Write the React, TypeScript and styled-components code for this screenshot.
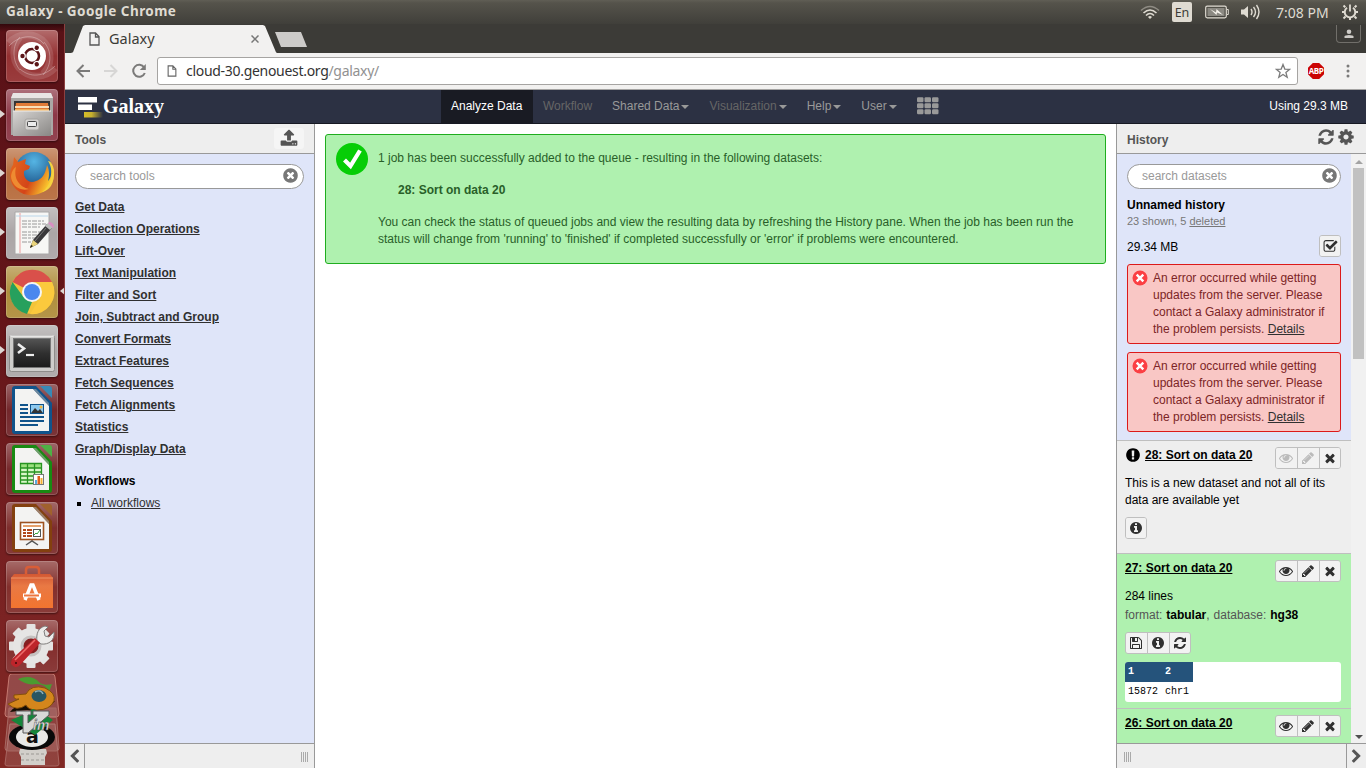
import React from "react";
import styled, { createGlobalStyle, css } from "styled-components";

const GlobalStyle = createGlobalStyle`
  * { box-sizing: border-box; }
  html, body { margin: 0; padding: 0; width: 1366px; height: 768px; overflow: hidden; }
  body { font-family: "Liberation Sans", Arial, sans-serif; font-size: 12px; line-height: 17px; color: #000; }
`;

/* ---------- icon glyphs (1792 unit grid) ---------- */
const CIRCLE = "M1664 896q0 209-103 385.5t-279.5 279.5-385.5 103-385.5-103-279.5-279.5-103-385.5 103-385.5 279.5-279.5 385.5-103 385.5 103 279.5 279.5 103 385.5z";
const GLYPHS = {
  refresh:
    "M1639 1056q0 5-1 7-64 268-268 434.5t-478 166.5q-146 0-282.5-55t-243.5-157l-129 129q-19 19-45 19t-45-19-19-45v-448q0-26 19-45t45-19h448q26 0 45 19t19 45-19 45l-137 137q71 66 161 102t187 36q134 0 250-65t186-179q11-17 53-117 8-23 30-23h192q13 0 22.5 9.5t9.5 22.5zm25-800v448q0 26-19 45t-45 19h-448q-26 0-45-19t-19-45 19-45l138-138q-148-137-349-137-134 0-250 65t-186 179q-11 17-53 117-8 23-30 23h-199q-13 0-22.5-9.5t-9.5-22.5v-7q65-268 270-434.5t480-166.5q146 0 284 55.5t245 156.5l130-129q19-19 45-19t45 19 19 45z",
  cog:
    "M1152 896q0-106-75-181t-181-75-181 75-75 181 75 181 181 75 181-75 75-181zm512-109v222q0 12-8 23t-20 13l-185 28q-19 54-39 91 35 50 107 138 10 12 10 25t-9 23q-27 37-99 108t-94 71q-12 0-26-9l-138-108q-44 23-91 38-16 136-29 186-7 28-36 28h-222q-14 0-24.5-8.5t-11.5-21.5l-28-184q-49-16-90-37l-141 107q-10 9-25 9-14 0-25-11-126-114-165-168-7-10-7-23 0-12 8-23 15-21 51-66.5t54-70.5q-27-50-41-99l-183-27q-13-2-21-12.5t-8-23.5v-222q0-12 8-23t19-13l186-28q14-46 39-92-40-57-107-138-10-12-10-24 0-10 9-23 26-36 98.5-107.5t94.5-71.5q13 0 26 10l138 107q44-23 91-38 16-136 29-186 7-28 36-28h222q14 0 24.5 8.5t11.5 21.5l28 184q49 16 90 37l142-107q9-9 24-9 13 0 25 10 129 119 165 170 7 8 7 22 0 12-8 23-15 21-51 66.5t-54 70.5q26 50 41 98l183 28q13 2 21 12.5t8 23.5z",
  times:
    "M1490 1322q0 40-28 68l-136 136q-28 28-68 28t-68-28l-294-294-294 294q-28 28-68 28t-68-28l-136-136q-28-28-28-68t28-68l294-294-294-294q-28-28-28-68t28-68l136-136q28-28 68-28t68 28l294 294 294-294q28-28 68-28t68 28l136 136q28 28 28 68t-28 68l-294 294 294 294q28 28 28 68z",
  pencil:
    "M491 1536l91-91-235-235-91 91v107h128v128h107zm523-928q0-22-22-22-10 0-17 7l-542 542q-7 7-7 17 0 22 22 22 10 0 17-7l542-542q7-7 7-17zm-54-192l416 416-832 832h-416v-416zm683 96q0 53-37 90l-166 166-416-416 166-165q36-38 90-38 53 0 91 38l235 234q37 39 37 91z",
  eye:
    "M1664 960q-152-236-381-353 61 104 61 225 0 185-131.5 316.5t-316.5 131.5-316.5-131.5-131.5-316.5q0-121 61-225-229 117-381 353 133 205 333.5 326.5t434.5 121.5 434.5-121.5 333.5-326.5zm-720-384q0-20-14-34t-34-14q-125 0-214.5 89.5t-89.5 214.5q0 20 14 34t34 14 34-14 14-34q0-86 61-147t147-61q20 0 34-14t14-34zm848 384q0 34-20 69-140 230-376.5 368.5t-499.5 138.5-499.5-139-376.5-368q-20-35-20-69t20-69q140-229 376.5-368t499.5-139 499.5 139 376.5 368q20 35 20 69z",
  info:
    "M1152 1376v-160q0-14-9-23t-23-9h-96v-512q0-14-9-23t-23-9h-320q-14 0-23 9t-9 23v160q0 14 9 23t23 9h96v320h-96q-14 0-23 9t-9 23v160q0 14 9 23t23 9h448q14 0 23-9t9-23zm-128-896v-160q0-14-9-23t-23-9h-192q-14 0-23 9t-9 23v160q0 14 9 23t23 9h192q14 0 23-9t9-23z" + CIRCLE,
  exclamation:
    "M896 128q209 0 385.5 103t279.5 279.5 103 385.5-103 385.5-279.5 279.5-385.5 103-385.5-103-279.5-279.5-103-385.5 103-385.5 279.5-279.5 385.5-103zm128 1247v-190q0-14-9-23.5t-22-9.5h-192q-13 0-23 10t-10 23v190q0 13 10 23t23 10h192q13 0 22-9.5t9-23.5zm-2-344l18-621q0-12-10-18-10-8-24-8h-220q-14 0-24 8-10 6-10 18l17 621q0 10 10 17.5t24 7.5h185q14 0 23.5-7.5t10.5-17.5z",
  timesCircle:
    "M1277 1122q0-26-19-45l-181-181 181-181q19-19 19-45 0-27-19-46l-90-90q-19-19-46-19-26 0-45 19l-181 181-181-181q-19-19-45-19-27 0-46 19l-90 90q-19 19-19 46 0 26 19 45l181 181-181 181q-19 19-19 45 0 27 19 46l90 90q19 19 46 19 26 0 45-19l181-181 181 181q19 19 45 19 27 0 46-19l90-90q19-19 19-46z" + CIRCLE,
  floppy:
    "M512 1536h768v-384h-768v384zm896 0h128v-896q0-14-10-38.5t-20-34.5l-281-281q-10-10-34-20t-39-10v416q0 40-28 68t-68 28h-576q-40 0-68-28t-28-68v-416h-128v1280h128v-416q0-40 28-68t68-28h832q40 0 68 28t28 68v416zm-384-928v-320q0-13-9.5-22.5t-22.5-9.5h-192q-13 0-22.5 9.5t-9.5 22.5v320q0 13 9.5 22.5t22.5 9.5h192q13 0 22.5-9.5t9.5-22.5zm640 32v928q0 40-28 68t-68 28h-1344q-40 0-68-28t-28-68v-1344q0-40 28-68t68-28h928q40 0 88 20t76 48l280 280q28 28 48 76t20 88z",
  checkSquare:
    "M1472 930v318q0 119-84.5 203.5t-203.5 84.5h-832q-119 0-203.5-84.5t-84.5-203.5v-832q0-119 84.5-203.5t203.5-84.5h832q63 0 117 25 15 7 18 23 3 17-9 29l-49 49q-10 10-23 10-3 0-9-2-23-6-45-6h-832q-66 0-113 47t-47 113v832q0 66 47 113t113 47h832q66 0 113-47t47-113v-254q0-13 9-22l64-64q10-10 23-10 6 0 12 3 20 8 20 29zm231-489l-814 814q-24 24-57 24t-57-24l-430-430q-24-24-24-57t24-57l110-110q24-24 57-24t57 24l263 263 647-647q24-24 57-24t57 24l110 110q24 24 24 57t-24 57z",
  chevronLeft:
    "M1427 301l-531 531 531 531q19 19 19 45t-19 45l-166 166q-19 19-45 19t-45-19l-742-742q-19-19-19-45t19-45l742-742q19-19 45-19t45 19l166 166q19 19 19 45t-19 45z",
  chevronRight:
    "M365 301l531 531-531 531q-19 19-19 45t19 45l166 166q19 19 45 19t45-19l742-742q19-19 19-45t-19-45l-742-742q-19-19-45-19t-45 19l-166 166q-19 19-19 45t19 45z",
  upload:
    "M1344 1472q0-26-19-45t-45-19-45 19-19 45 19 45 45 19 45-19 19-45zm256 0q0-26-19-45t-45-19-45 19-19 45 19 45 45 19 45-19 19-45zm128-224v320q0 40-28 68t-68 28h-1472q-40 0-68-28t-28-68v-320q0-40 28-68t68-28h427q21 56 70.5 92t110.5 36h256q61 0 110.5-36t70.5-92h427q40 0 68 28t28 68zm-325-648q-17 40-59 40h-256v448q0 26-19 45t-45 19h-256q-26 0-45-19t-19-45v-448h-256q-42 0-59-40-17-39 14-69l448-448q18-19 45-19t45 19l448 448q31 30 14 69z",
};

const GlyphSvg = styled.svg<{ $size: number }>`
  display: block;
  flex: none;
  width: ${(p) => p.$size}px;
  height: ${(p) => p.$size}px;
  fill: currentColor;
`;
const Glyph = ({ name, size = 14 }: { name: keyof typeof GLYPHS; size?: number }) => (
  <GlyphSvg $size={size} viewBox="0 0 1792 1792">
    <path fillRule="evenodd" d={GLYPHS[name]} />
  </GlyphSvg>
);

/* ---------- desktop ---------- */
const uiFont = css`font-family: "Noto Sans", "Open Sans", sans-serif;`;

const Desktop = styled.div`
  display: flex;
  flex-direction: column;
  width: 1366px;
  height: 768px;
  overflow: hidden;
`;
const SystemBar = styled.header`
  ${uiFont}
  flex: none;
  height: 24px;
  padding: 0 7px 0 6px;
  display: flex;
  align-items: center;
  justify-content: space-between;
  background: linear-gradient(#605e55 0, #55534b 3px, #403f3a 100%);
  color: #dfdbd2;
`;
const WindowTitle = styled.div`
  font-weight: 700;
  font-size: 13.5px;
  letter-spacing: 0.45px;
  margin-bottom: 1px;
  white-space: nowrap;
`;
const Indicators = styled.div`
  display: flex;
  align-items: center;
`;
const Lang = styled.div`
  width: 20px;
  height: 20px;
  margin: 0 13px 0 12px;
  border-radius: 2px;
  background: #dfdbd2;
  color: #3c3b37;
  font-size: 12.5px;
  line-height: 21px;
  text-align: center;
`;
const Clock = styled.div`
  font-size: 14px;
  width: 53px;
  margin: 0 12px 0 15px;
  white-space: nowrap;
`;
const Below = styled.div`
  display: flex;
  flex: 1;
  min-height: 0;
`;

/* ---------- launcher ---------- */
const Rail = styled.nav`
  flex: none;
  width: 65px;
  padding: 6px 6px 0;
  display: flex;
  flex-direction: column;
  gap: 7px;
  background: linear-gradient(#32080c 0, #5a1217 8px, #641519 40%, #7b2323 80%, #812823 100%);
  border-right: 1px solid #8d4040;
  overflow: hidden;
`;
const Tile = styled.div<{ $tint: string }>`
  position: relative;
  flex: none;
  width: 52px;
  height: 52px;
  border-radius: 4px;
  background: linear-gradient(rgba(255, 255, 255, 0.3), rgba(255, 255, 255, 0.02) 50%, rgba(255, 255, 255, 0.08)), ${(p) => p.$tint};
  box-shadow: inset 0 0 0 1px rgba(255, 255, 255, 0.17), 0 1px 2px rgba(0, 0, 0, 0.45);
  > svg { display: block; }
`;
const Pip = styled.i<{ $side?: "right" }>`
  position: absolute;
  top: 21px;
  ${(p) => (p.$side ? "right: -7px; border-right: 5px solid #ddd6d2;" : "left: -6px; border-left: 5px solid #ddd6d2;")}
  border-top: 4px solid transparent;
  border-bottom: 4px solid transparent;
`;
const StackSvg = styled.svg`
  display: block;
  flex: none;
  margin: -5px 0 0 -2px;
`;

const Art = ({ children }: { children: React.ReactNode }) => (
  <svg width="52" height="52" viewBox="0 0 52 52">{children}</svg>
);
const DashArt = () => (
  <Art>
    <path d="M3 13C12 2 30 2 39 13c7 9 7 22-2 31M49 38C38 50 22 48 13 38 6 29 6 16 14 7" fill="none" stroke="#fff" strokeOpacity=".13" strokeWidth="7" />
    <path d="M3 16C14 4 30 4 38 14M49 36C38 47 24 48 14 39" fill="none" stroke="#fff" strokeOpacity=".3" />
    <path d="M38 12c8 9 8 23-1 33M14 40C6 31 6 15 14 7" fill="none" stroke="#fff" strokeOpacity=".3" />
    <circle cx="26" cy="26" r="14" fill="#fff" />
    <circle cx="26" cy="26" r="7" fill="none" stroke="#5b1417" strokeWidth="2.6" />
    {[180, 60, 300].map((a) => (
      <g key={a} transform={`rotate(${a} 26 26)`}>
        <circle cx="35.500" cy="26" r="3.400" fill="#fff" />
        <circle cx="35.500" cy="26" r="2.200" fill="#5b1417" />
      </g>
    ))}
  </Art>
);
const FilesArt = () => (
  <Art>
    <defs>
      <linearGradient id="cab" x1="0" y1="0" x2="1" y2="1"><stop stopColor="#d7d5d3" /><stop offset="1" stopColor="#898785" /></linearGradient>
    </defs>
    <path d="M7 4h38l2 5v37H5V9z" fill="#aaa8a6" />
    <path d="M7 4h38l2 5H5z" fill="#e8e6e5" />
    <path d="M8 12h36v12H8z" fill="#343434" />
    <path d="M10 14h32l1 9H9z" fill="#e17b37" />
    <path d="M9 17h34v2H9z" fill="#f9dfb9" />
    <path d="M9 20h34v2H9z" fill="#efb15d" />
    <path d="M7 22h38v25H7z" fill="url(#cab)" />
    <path d="M7 22h38" stroke="#efedec" />
    <rect x="19" y="30" width="14" height="11" rx="2" fill="#d5d3d1" stroke="#a5a3a0" />
    <rect x="21.500" y="32.500" width="9" height="5" rx="1" fill="#ececec" stroke="#474747" />
  </Art>
);
const FirefoxArt = () => (
  <Art>
    <defs>
      <radialGradient id="globe" cx=".5" cy=".25" r=".8"><stop stopColor="#55b5e4" /><stop offset="1" stopColor="#124278" /></radialGradient>
      <linearGradient id="fox" x1="0" y1="0" x2="1" y2=".4"><stop stopColor="#e66a20" /><stop offset=".6" stopColor="#d44518" /><stop offset="1" stopColor="#f9c52c" /></linearGradient>
    </defs>
    <circle cx="28" cy="23" r="19" fill="url(#globe)" />
    <path d="M8 9l4 5 8-3-1 5 5 2-1 3-5 2c-1 8 5 13 12 10 6-2 9-6 11-16 3 6 2 13 1 16 3-3 4-8 3-17 4 7 4 17-2 23-6 8-22 12-32 3C2 34 3 22 7 17z" fill="url(#fox)" />
    <path d="M42 13c7 11 3 25-6 31 7-1 13-8 12-22-1-5-3-9-6-9z" fill="#f5d23f" />
    <path d="M10 19c-3 12 4 20 13 22-10 3-18-5-18-13 1-5 2-7 5-9z" fill="#ee8b31" />
  </Art>
);
const EditorArt = () => (
  <Art>
    <path d="M9 5h34v42H9z" fill="#f7f7f5" stroke="#a9a8a8" />
    <path d="M14 6v40" stroke="#ee9c9c" /><path d="M10 9h32" stroke="#b9d6ea" />
    <path d="M16 14h22M16 17h24M16 20h18M16 25h23M16 28h22M16 31h19M16 35h10" stroke="#999" strokeDasharray="5 1 3 1" />
    <path d="M24 41l3-8 14-16 5 4-14 16z" fill="#39383a" />
    <path d="M24 41l3-8 5 4z" fill="#ead47b" /><path d="M24 41l1-3 2 1z" fill="#111" />
    <path d="M39 19l3-3 5 4-3 3z" fill="#bbb" /><path d="M42 16l2-1q4 1 4 5l-1 1z" fill="#d98ec2" />
    <path d="M29 34l11-13" stroke="#777" />
  </Art>
);
const ChromeArt = () => (
  <Art>
    <circle cx="26" cy="26" r="22" fill="#f3c43a" />
    <path d="M26 26L6.5 16A22 22 0 0 1 46 16z" fill="#d9504a" />
    <path d="M6.5 16l11 15 8.500 5-5 12A22 22 0 0 1 6.500 16z" fill="#26a05d" />
    <path d="M26 16h20a22 22 0 0 1-22 32l11-17z" fill="#fbc93d" />
    <circle cx="26" cy="26" r="10" fill="#f5f5f5" /><circle cx="26" cy="26" r="8" fill="#4a87ee" />
  </Art>
);
const TerminalArt = () => (
  <Art>
    <defs><linearGradient id="scr" x1="0" y1="0" x2="0" y2="1"><stop stopColor="#555" /><stop offset=".5" stopColor="#303030" /><stop offset="1" stopColor="#1b1b1b" /></linearGradient></defs>
    <rect x="3.500" y="10.500" width="45" height="36" rx="2" fill="#cecdcb" stroke="#8e8c8a" />
    <path d="M4 11h44" stroke="#fff" />
    <rect x="7.500" y="13.500" width="37" height="29" fill="url(#scr)" stroke="#777" />
    <path d="M12 19l6 4.500-6 4.500" fill="none" stroke="#eee" strokeWidth="2.600" />
    <path d="M20 30h8" stroke="#eee" strokeWidth="2.200" />
  </Art>
);
const DocBase = ({ color, light, children }: { color: string; light: string; children: React.ReactNode }) => (
  <Art>
    <path d="M9 2h21l16 17v28a3 3 0 0 1-3 3H9a3 3 0 0 1-3-3V5a3 3 0 0 1 3-3z" fill={color} />
    <path d="M9 5h18l16 17v25H9z" fill="#f3f3f2" />
    <path d="M27 5l16 17v-3L30 5z" fill="#aaa" opacity=".6" />
    <path d="M34 2h9a3 3 0 0 1 3 3v9z" fill={light} />
    {children}
  </Art>
);
const WriterArt = () => (
  <DocBase color="#10538b" light="#3889b5">
    <path d="M14 21h8M14 25h8M14 29h8M14 33h24M14 37h24M14 41h18" stroke="#10538b" strokeWidth="2" />
    <rect x="24.500" y="20.500" width="13" height="9" fill="#8dc9ef" stroke="#10538b" />
    <path d="M25 29l4-5 3 3 2-2 3 4z" fill="#333" /><circle cx="35" cy="23" r="1.500" fill="#f3b53c" />
  </DocBase>
);
const CalcArt = () => (
  <DocBase color="#188a12" light="#4eb044">
    <path d="M14 20h22v21H14z" fill="#d9f7c9" />
    <path d="M14 21h22v4H14z" fill="#9be07e" />
    <path d="M14.500 20.500h21v20h-21zM14 25h22M14 29h22M14 33h22M14 37h22M21.500 20v21M28.500 20v21" fill="none" stroke="#279421" strokeWidth="1.300" />
    <rect x="27.500" y="31.500" width="10" height="10" fill="#fff" stroke="#777" />
    <path d="M29 37h2v4h-2z" fill="#59a9dc" /><path d="M31.500 33h2.500v8h-2.500z" fill="#e25f19" /><path d="M34.500 35h2v6h-2z" fill="#f5b032" />
  </DocBase>
);
const ImpressArt = () => (
  <DocBase color="#83400f" light="#a0612d">
    <path d="M20 43l6-4 6 4M26 37v3" fill="none" stroke="#555" strokeWidth="1.500" />
    <rect x="14.500" y="20.500" width="23" height="17" fill="#fff" stroke="#9e5220" strokeWidth="1.600" />
    <path d="M17 24h18" stroke="#df8948" strokeWidth="1.600" />
    <path d="M17 28h3M17 31h3M17 34h3M21 28h5M21 31h5M21 34h5" stroke="#b2481b" strokeWidth="2" />
    <rect x="27.500" y="27.500" width="7" height="7" fill="#fff" stroke="#555" /><path d="M28 33l2-2 1 1 3-4" fill="none" stroke="#35a43b" />
  </DocBase>
);
const StoreArt = () => (
  <Art>
    <defs><linearGradient id="bag" x1="0" y1="0" x2="0" y2="1"><stop stopColor="#d35833" /><stop offset=".35" stopColor="#e97944" /><stop offset="1" stopColor="#f2742f" /></linearGradient></defs>
    <path d="M20 18V9q0-3 3-3h7q3 0 3 3v9" fill="none" stroke="#d85d37" strokeWidth="2.500" />
    <path d="M5 17l3-4h36l3 4v30H5z" fill="url(#bag)" /><path d="M5 17h42" stroke="#ef9367" />
    <path d="M19 39l6-15h2l6 15" fill="none" stroke="#fff" strokeWidth="3.400" />
    <path d="M17 34.500h18" stroke="#fff" strokeWidth="4" /><path d="M18 34.500h15" stroke="#ed7740" strokeWidth="2" />
  </Art>
);
const SettingsArt = () => (
  <Art>
    <g transform="translate(25 26)">
      {[0, 45, 90, 135].map((a) => <rect key={a} x="-4.500" y="-22" width="9" height="44" rx="1" fill="#e4e3e2" transform={`rotate(${a})`} />)}
      <circle r="18" fill="#e6e5e4" /><circle r="9" fill="#851f21" stroke="#c5c1c0" strokeWidth="3" />
    </g>
    <path d="M31 21c-1-7 1-13 8-15l3 1-4 4 1 5 4 1 5-5c1 8-5 13-13 12z" fill="#ecebea" stroke="#807e7d" />
    <path d="M29 18l5 5-19 21q-4 5-8 2t0-8z" fill="#bd252b" />
    <path d="M9 40l20-20" stroke="#ef6b6b" strokeWidth="1.600" /><circle cx="10" cy="43" r="1" fill="#3b0909" />
  </Art>
);
const AppStack = () => (
  <StackSvg width="56" height="94" viewBox="0 0 56 94">
    <path d="M8 0h40q3 0 3 3l4 37q0 3-3 3H4q-3 0-3-3L5 3q0-3 3-3z" fill="#fff" fillOpacity=".17" stroke="#c57970" />
    <path d="M6 50h45l4 40q0 2-3 2H4q-3 0-3-2z" fill="#fff" fillOpacity=".12" stroke="#a76560" />
    <path d="M5 34h47l3 40q0 3-3 3H4q-3 0-3-3z" fill="#fff" fillOpacity=".12" stroke="#a86963" />
    <path d="M6 38q5-8 20-7l25-4q-9 12-28 9z" fill="#180e05" />
    <path d="M14 5q13-5 21 3 4 4 13 2l-3 8q-3-8-13-8-9 2-18-5z" fill="#4b9b30" />
    <path d="M4 30l11-5q-6 1-5-4l12-1q5-10 19-6 11 5 9 13-4 9-17 9-9 0-11-5-9 7-18-1z" fill="#d4861c" stroke="#86500a" />
    <ellipse cx="35" cy="22" rx="7.500" ry="6" fill="#295663" /><path d="M31 18q6-3 8 2" fill="none" stroke="#8fb0bb" strokeWidth="1.500" />
    <path d="M16 75h26l1 4-2 4v8H17v-8l-2-4z" fill="#d2cfca" /><path d="M17 80h24M17 86h24" stroke="#9b9893" strokeDasharray="3 2" />
    <ellipse cx="28" cy="63" rx="23" ry="13" fill="#090909" /><ellipse cx="28" cy="63" rx="16" ry="10" fill="#e9e9e7" />
    <text x="22" y="69" fontFamily="DejaVu Sans" fontWeight="700" fontSize="19" fill="#101010">a</text>
    <path d="M7 46l14-6 8-5 13 6 7 5-18 15z" fill="#15863a" />
    <path d="M12 37h15v4h-3v8l9-8h-4v-4h16v4L24 59h-5V41h-7z" fill="#d8d8d6" stroke="#595959" />
    <text x="29" y="56" fontFamily="Liberation Sans" fontWeight="700" fontStyle="italic" fontSize="14" fill="#dedddd" stroke="#444" strokeWidth=".4">im</text>
  </StackSvg>
);

const LAUNCHER: { art: () => React.JSX.Element; tint: string; running?: boolean; active?: boolean }[] = [
  { art: DashArt, tint: "#922c2d" },
  { art: FilesArt, tint: "#8a3443", running: true },
  { art: FirefoxArt, tint: "#b66a3a", running: true },
  { art: EditorArt, tint: "#aaa4a5", running: true },
  { art: ChromeArt, tint: "#ae8c39", running: true, active: true },
  { art: TerminalArt, tint: "#aaa6a6", running: true },
  { art: WriterArt, tint: "#702327" },
  { art: CalcArt, tint: "#742528" },
  { art: ImpressArt, tint: "#7b2928" },
  { art: StoreArt, tint: "#802b28" },
  { art: SettingsArt, tint: "#812a29" },
];

/* ---------- browser ---------- */
const Browser = styled.div`
  flex: 1;
  min-width: 0;
  display: flex;
  flex-direction: column;
`;
const TabStrip = styled.div`
  flex: none;
  height: 29px;
  padding: 1px 4px 0 6px;
  display: flex;
  background: #3c3b37;
`;
const Tab = styled.div`
  ${uiFont}
  width: 206px;
  height: 28px;
  padding: 0 18px 0 18px;
  display: flex;
  align-items: center;
  gap: 9px;
  background: #f2f1f0;
  clip-path: polygon(0 100%, 2px 97%, 12px 4%, 14px 0, 192px 0, 194px 4%, 205px 97%, 206px 100%);
  color: #3c3b37;
  font-size: 14.5px;
  > span { flex: 1; margin-bottom: 2px; }
`;
const NewTab = styled.div`
  width: 33px;
  height: 15px;
  margin: 7px 0 0 -3px;
  background: #cdcbc9;
  clip-path: polygon(1px 0, 27px 0, 33px 100%, 7px 100%);
`;
const Profile = styled.div`
  width: 25px;
  height: 18px;
  margin: 0 1px 0 auto;
  display: flex;
  align-items: center;
  justify-content: center;
  border: 1px solid #716f6a;
  border-top: 0;
  border-radius: 0 0 4px 4px;
`;
const Toolbar = styled.div`
  flex: none;
  height: 37px;
  padding: 0 10px 0 10px;
  display: flex;
  align-items: center;
  background: #f2f1f0;
  border-bottom: 1px solid #a5a4a3;
`;
const NavButtons = styled.div`
  display: flex;
  gap: 10px;
  width: 82px;
`;
const Omnibox = styled.div`
  ${uiFont}
  width: 1141px;
  height: 28px;
  padding: 0 6px 0 9px;
  display: flex;
  align-items: center;
  border: 1px solid #a6a4a2;
  border-radius: 3px;
  background: #fff;
  font-size: 14px;
  color: #333;
  > p { flex: 1; margin: 0 0 1px 9px; letter-spacing: -0.3px; }
  em { font-style: normal; color: #919191; }
`;
const Extension = styled.div`
  width: 16px;
  height: 16px;
  margin: 0 22px 0 10px;
  display: flex;
  align-items: center;
  justify-content: center;
  clip-path: polygon(30% 0, 70% 0, 100% 30%, 100% 70%, 70% 100%, 30% 100%, 0 70%, 0 30%);
  background: #cb0404;
  color: #fff;
  font: 700 8px/16px "Open Sans", sans-serif;
  letter-spacing: -0.4px;
`;

/* ---------- Galaxy masthead ---------- */
const Masthead = styled.div`
  flex: none;
  height: 34px;
  padding: 0 18px 0 13px;
  display: flex;
  background: #2c3143;
  border-bottom: 1px solid #171923;
`;
const Brand = styled.div`
  width: 363px;
  display: flex;
  align-items: center;
  color: #fff;
  font: 700 20px/32px "Liberation Serif", serif;
  padding-bottom: 2px;
  > svg { margin-top: 2px; }
`;
const Menu = styled.div`
  flex: 1;
  display: flex;
`;
const MenuItem = styled.div<{ $tone?: "active" | "dim" }>`
  padding: 0 10px 1px;
  display: flex;
  align-items: center;
  white-space: nowrap;
  color: ${(p) => (p.$tone === "active" ? "#fff" : p.$tone === "dim" ? "#666" : "#999")};
  background: ${(p) => (p.$tone === "active" ? "#191b23" : "transparent")};
  &:first-child { padding-right: 10.6px; }
`;
const Caret = styled.i`
  margin: 2px 0 0 2px;
  border: 4px solid transparent;
  border-top-color: #999;
  border-bottom: 0;
`;
const Quota = styled.div`
  color: #fff;
  line-height: 32px;
`;

/* ---------- panels ---------- */
const Workspace = styled.main`
  flex: 1;
  min-height: 0;
  display: grid;
  grid-template-columns: 250px 1fr 250px;
`;
const Panel = styled.aside<{ $side: "left" | "right" }>`
  display: flex;
  flex-direction: column;
  min-height: 0;
  background: #dfe5f9;
  border-${(p) => (p.$side === "left" ? "right" : "left")}: 1px solid #999;
`;
const PanelHeader = styled.div`
  flex: none;
  height: 30px;
  padding: 2px 12px 0 10px;
  display: flex;
  align-items: center;
  background: #eee;
  border-bottom: 1px solid #999;
  color: #555;
  font-weight: 700;
  > span { flex: 1; padding-top: 2px; }
`;
const UploadButton = styled.div`
  width: 30px;
  height: 21px;
  margin: 0 -2px 2px 0;
  padding-bottom: 2px;
  display: flex;
  align-items: center;
  justify-content: center;
  border-radius: 3px;
  background: #f5f5f5;
`;
const HeaderIcons = styled.div`
  display: flex;
  gap: 2px;
  margin: 0 -1px 6px 0;
`;
const PanelFooter = styled.div`
  flex: none;
  height: 25px;
  display: flex;
  justify-content: space-between;
  background: #eee;
  border-top: 1px solid #999;
  color: #555;
`;
const Collapse = styled.div<{ $side: "left" | "right" }>`
  width: 20px;
  display: flex;
  align-items: center;
  justify-content: center;
  border-${(p) => (p.$side === "left" ? "right" : "left")}: 1px solid #999;
`;
const Grip = styled.div`
  width: 7px;
  height: 10px;
  margin: 8px 6px 0 7px;
  background: repeating-linear-gradient(90deg, #aaa 0 1px, transparent 1px 2px);
`;
const SearchBox = styled.div<{ $end: number }>`
  height: 25px;
  padding: 0 ${(p) => p.$end}px 0 14px;
  display: flex;
  align-items: center;
  justify-content: space-between;
  border: 1px solid #999;
  border-radius: 13px;
  background: #fff;
  color: #999;
  > svg { color: #777; margin-bottom: 2px; }
`;
const ToolsBody = styled.div`
  flex: 1;
  padding: 10px;
`;
const ToolList = styled.div`
  display: flex;
  flex-direction: column;
  align-items: flex-start;
  margin-top: 7px;
  line-height: 22px;
`;
const ToolLink = styled.a<{ $light?: boolean }>`
  color: #303030;
  font-weight: ${(p) => (p.$light ? 400 : 700)};
  text-decoration: underline;
`;
const Heading = styled.div`
  margin-top: 10px;
  font-weight: 700;
`;
const Bullet = styled.div`
  display: flex;
  align-items: center;
  gap: 10px;
  padding-left: 2px;
  &::before { content: ""; width: 4px; height: 4px; margin-top: 2px; background: #000; }
`;
const Center = styled.section`
  padding: 10px;
  background: #fff;
`;
const Done = styled.div`
  height: 130px;
  padding: 8px 10px;
  display: flex;
  gap: 10px;
  border: 1px solid #1fad1f;
  border-radius: 3px;
  background: #aff1af;
  color: #295f29;
  > svg { flex: none; }
  p { margin: 0 0 15px; }
`;
const DoneText = styled.div`
  padding-top: 7px;
  b { display: block; margin: 0 0 15px 20px; }
`;

/* ---------- history ---------- */
const Scroller = styled.div`
  flex: 1;
  min-height: 0;
  display: flex;
`;
const HistoryList = styled.div`
  flex: 1;
  min-width: 0;
  overflow: hidden;
`;
const HistoryInfo = styled.div`
  height: 287px;
  padding: 10px 10px 0;
  border-bottom: 1px solid #bfbfbf;
`;
const HistoryName = styled.div`
  margin-top: 8px;
  font-weight: 700;
`;
const Shown = styled.div`
  font-size: 11px;
  line-height: 15px;
  color: #777;
`;
const SizeRow = styled.div`
  display: flex;
  align-items: center;
  justify-content: space-between;
  height: 22px;
  margin: 6px 0 7px;
  > span { padding-top: 2px; }
`;
const ErrorBox = styled.div`
  height: 80px;
  margin-bottom: 8px;
  padding: 5px;
  display: flex;
  gap: 4px;
  border: 1px solid #dc1a1a;
  border-radius: 3px;
  background: #f9c7c5;
  color: #7c2526;
  > svg { flex: none; margin-left: -1px; margin-right: 1px; }
  u { color: #303030; }
`;
const Dataset = styled.div<{ $state: "new" | "ok"; $height: number }>`
  height: ${(p) => p.$height}px;
  padding: 6px 10px 0 8px;
  background: ${(p) => (p.$state === "ok" ? "#aff1af" : "#eee")};
  border-bottom: 1px solid #bfbfbf;
`;
const TitleBar = styled.div`
  display: flex;
  align-items: flex-start;
  height: 22px;
  > svg { margin-right: 4px; }
`;
const DatasetTitle = styled.a`
  flex: 1;
  font-weight: 700;
  text-decoration: underline;
`;
const Buttons = styled.div`
  display: flex;
  width: max-content;
  border: 1px solid #bfbfbf;
  border-radius: 3px;
  overflow: hidden;
`;
const IconButton = styled.div<{ $off?: boolean }>`
  width: 22px;
  height: 20px;
  display: flex;
  align-items: center;
  justify-content: center;
  background: #f2f2f2;
  color: ${(p) => (p.$off ? "#bbb" : "#303030")};
  &:not(:last-child) { padding-right: 1px; }
  &:first-child { width: 21px; }
  &:last-child { width: 21px; }
  &:only-child { width: 20px; }
  & + & { border-left: 1px solid #bfbfbf; }
`;
const Blurb = styled.div<{ $gap: number }>`
  margin: 6px 0 ${(p) => p.$gap}px;
`;
const Meta = styled.div`
  margin-bottom: 8px;
  color: #555;
  word-spacing: 0.6px;
  b { color: #000; }
`;
const Peek = styled.div`
  height: 40px;
  margin-top: 8px;
  border-radius: 3px;
  background: #fff;
  overflow: hidden;
  font: 10px/20px "Liberation Mono", monospace;
`;
const PeekRow = styled.div<{ $head?: boolean }>`
  display: grid;
  grid-template-columns: 37px 1fr;
  width: 68px;
  padding-left: 3px;
  line-height: ${(p) => (p.$head ? 20 : 19)}px;
  height: 20px;
  ${(p) => p.$head && "background: #25537b; color: #fff; font-weight: 700;"}
`;
const Scrollbar = styled.div`
  width: 15px;
  padding: 6px 0 4px;
  display: flex;
  flex-direction: column;
  align-items: center;
  background: #f1f1f1;
`;
const Arrow = styled.i<{ $up?: boolean }>`
  border: 4px solid transparent;
  ${(p) => (p.$up ? "border-top: 0; border-bottom-color: #a3a3a3; margin-bottom: 4px;" : "border-bottom: 0; border-top-color: #505050; margin-top: auto;")}
`;
const Thumb = styled.div`
  width: 11px;
  height: 191px;
  background: #c1c1c1;
`;

const RedCross = () => (
  <svg width="16" height="16" viewBox="0 0 16 16">
    <circle cx="8" cy="8" r="7.500" fill="#fb3f43" />
    <path d="M4.700 4.700l6.600 6.600M11.300 4.700l-6.600 6.600" stroke="#fff" strokeWidth="2.400" />
  </svg>
);
const PageIcon = ({ w, h, color }: { w: number; h: number; color: string }) => (
  <svg width={w} height={h} viewBox="0 0 11 14"><path d="M1 1h5.500l3.500 3.500V13H1zM6.500 1v4H10" fill="none" stroke={color} strokeWidth="1.300" /></svg>
);
const ErrorMessage = () => (
  <ErrorBox>
    <RedCross />
    <div>An error occurred while getting updates from the server. Please contact a Galaxy administrator if the problem persists. <u>Details</u></div>
  </ErrorBox>
);
const Actions = ({ off }: { off?: boolean }) => (
  <Buttons>
    <IconButton $off={off}><Glyph name="eye" /></IconButton>
    <IconButton $off={off}><Glyph name="pencil" /></IconButton>
    <IconButton><Glyph name="times" /></IconButton>
  </Buttons>
);

const TOOLS = ["Get Data", "Collection Operations", "Lift-Over", "Text Manipulation", "Filter and Sort", "Join, Subtract and Group", "Convert Formats", "Extract Features", "Fetch Sequences", "Fetch Alignments", "Statistics", "Graph/Display Data"];

export default function App() {
  return (
    <Desktop>
      <GlobalStyle />
      <SystemBar>
        <WindowTitle>Galaxy - Google Chrome</WindowTitle>
        <Indicators>
          <svg width="20" height="16" viewBox="0 0 20 16" fill="none" stroke="#dfdbd2" strokeWidth="1.600">
            <path d="M1 6.500q9-8 18 0" stroke="#8f8c84" /><path d="M3.500 9q6.500-6 13 0M6 11.500q4-4 8 0" /><path d="M8 13q2-1.800 4 0l-2 2z" fill="#dfdbd2" stroke="none" />
          </svg>
          <Lang>En</Lang>
          <svg width="24" height="14" viewBox="0 0 24 14">
            <rect x=".7" y="1.200" width="20.600" height="11.600" rx="1.500" fill="none" stroke="#dfdbd2" strokeWidth="1.200" />
            <rect x="2.500" y="3" width="17" height="8" fill="#8b8982" /><path d="M22 4.500h1.300v5H22" stroke="#dfdbd2" fill="none" />
            <path d="M5 4l6 3.500L11.500 4 18 10l-6-2.500-.5 2.500z" fill="#f5f2eb" />
          </svg>
          <svg width="21" height="18" viewBox="0 0 21 18" style={{ marginLeft: 11 }}>
            <path d="M1 6.500h3l4-3.500v12l-4-3.500H1z" fill="#dfdbd2" />
            <path d="M11 6q2 3 0 6M13.500 4q4 5 0 10M16.500 2q5 7 0 14" fill="none" stroke="#dfdbd2" strokeWidth="1.400" />
          </svg>
          <Clock>7:08 PM</Clock>
          <svg width="18" height="18" viewBox="0 0 18 18" fill="none" stroke="#dfdbd2">
            <path d="M6 4.800a5.300 5.300 0 1 0 6 0" strokeWidth="2" /><path d="M9 1.500v7" strokeWidth="1.800" />
            <path d="M4.300 4.300L2.500 2.500M13.700 4.300l1.800-1.800M3.500 9H1M14.500 9H17M4.500 13.500l-2 2M13.500 13.500l2 2M9 14.500V17" strokeWidth="2" />
          </svg>
        </Indicators>
      </SystemBar>
      <Below>
        <Rail>
          {LAUNCHER.map(({ art: Icon, tint, running, active }, i) => (
            <Tile key={i} $tint={tint}>
              <Icon />
              {running && <Pip />}
              {active && <Pip $side="right" />}
            </Tile>
          ))}
          <AppStack />
        </Rail>
        <Browser>
          <TabStrip>
            <Tab>
              <PageIcon w={11} h={14} color="#555" />
              <span>Galaxy</span>
              <svg width="8" height="8" viewBox="0 0 8 8"><path d="M.5.5l7 7M7.500.5l-7 7" stroke="#777" strokeWidth="1.500" /></svg>
            </Tab>
            <NewTab />
            <Profile>
              <svg width="10" height="10" viewBox="0 0 10 10" fill="#cdcbc7"><circle cx="5" cy="2.700" r="2.300" /><path d="M.5 9V7.500Q1 6 5 6t4.500 1.500V9z" /></svg>
            </Profile>
          </TabStrip>
          <Toolbar>
            <NavButtons>
              <svg width="18" height="18" viewBox="0 0 18 18" fill="none" stroke="#7b7a79" strokeWidth="2"><path d="M15 9H2.500M8.500 3L2.500 9l6 6" /></svg>
              <svg width="18" height="18" viewBox="0 0 18 18" fill="none" stroke="#d7d6d5" strokeWidth="2"><path d="M1 9h12.500M7.500 3l6 6-6 6" /></svg>
              <svg width="18" height="18" viewBox="0 0 18 18" fill="none" stroke="#7b7a79" strokeWidth="2"><path d="M13.200 5.500A6 6 0 1 0 13.800 11" /><path d="M14.800 2v6h-6z" fill="#7b7a79" stroke="none" /></svg>
            </NavButtons>
            <Omnibox>
              <PageIcon w={10} h={12} color="#666" />
              <p>cloud-30.genouest.org<em>/galaxy/</em></p>
              <svg width="16" height="16" viewBox="0 0 16 16"><path d="M8 1.500l1.800 4.600 4.900.2-3.800 3.100 1.300 4.800L8 11.500l-4.200 2.700 1.300-4.800-3.800-3.100 4.900-.2z" fill="none" stroke="#7b7b7b" strokeWidth="1.300" /></svg>
            </Omnibox>
            <Extension>ABP</Extension>
            <svg width="4" height="14" viewBox="0 0 4 14" fill="#7b7a79"><circle cx="2" cy="2" r="1.500" /><circle cx="2" cy="7" r="1.500" /><circle cx="2" cy="12" r="1.500" /></svg>
          </Toolbar>
          <Masthead>
            <Brand>
              <svg width="25" height="22" viewBox="0 0 25 22">
                <defs><linearGradient id="bar"><stop stopColor="#d5bd29" /><stop offset=".4" stopColor="#c7b02e" /><stop offset="1" stopColor="#2c3143" /></linearGradient></defs>
                <path d="M0 1h19v5.500H0zM0 8.500h14v5.500H0z" fill="#fff" /><path d="M6 16h19v5.500H6z" fill="url(#bar)" />
              </svg>
              Galaxy
            </Brand>
            <Menu>
              <MenuItem $tone="active">Analyze Data</MenuItem>
              <MenuItem $tone="dim">Workflow</MenuItem>
              <MenuItem>Shared Data<Caret /></MenuItem>
              <MenuItem $tone="dim">Visualization<Caret /></MenuItem>
              <MenuItem>Help<Caret /></MenuItem>
              <MenuItem>User<Caret /></MenuItem>
              <MenuItem>
                <svg width="23" height="18" viewBox="0 0 23 18" fill="#999">
                  {[0, 6, 12].map((y) => [0, 7.5, 15].map((x) => <rect key={`${x}-${y}`} x={x} y={y + 0.3} width="6.500" height="5" rx="1.200" />))}
                </svg>
              </MenuItem>
            </Menu>
            <Quota>Using 29.3 MB</Quota>
          </Masthead>
          <Workspace>
            <Panel $side="left">
              <PanelHeader>
                <span>Tools</span>
                <UploadButton><Glyph name="upload" size={18} /></UploadButton>
              </PanelHeader>
              <ToolsBody>
                <SearchBox $end={4}>search tools<Glyph name="timesCircle" size={17} /></SearchBox>
                <ToolList>
                  {TOOLS.map((t) => <ToolLink key={t}>{t}</ToolLink>)}
                  <Heading>Workflows</Heading>
                  <Bullet><ToolLink $light>All workflows</ToolLink></Bullet>
                </ToolList>
              </ToolsBody>
              <PanelFooter>
                <Collapse $side="left"><Glyph name="chevronLeft" size={15} /></Collapse>
                <Grip />
              </PanelFooter>
            </Panel>
            <Center>
              <Done>
                <svg width="32" height="32" viewBox="0 0 32 32"><circle cx="16" cy="16" r="16" fill="#07cd07" /><path d="M8.500 17l6 6L24 7.500" fill="none" stroke="#fff" strokeWidth="4.200" /></svg>
                <DoneText>
                  <p>1 job has been successfully added to the queue - resulting in the following datasets:</p>
                  <b>28: Sort on data 20</b>
                  <p>You can check the status of queued jobs and view the resulting data by refreshing the History pane. When the job has been run the status will change from 'running' to 'finished' if completed successfully or 'error' if problems were encountered.</p>
                </DoneText>
              </Done>
            </Center>
            <Panel $side="right">
              <PanelHeader>
                <span>History</span>
                <HeaderIcons><Glyph name="refresh" size={18} /><Glyph name="cog" size={18} /></HeaderIcons>
              </PanelHeader>
              <Scroller>
                <HistoryList>
                  <HistoryInfo>
                    <SearchBox $end={2}>search datasets<Glyph name="timesCircle" size={17} /></SearchBox>
                    <HistoryName>Unnamed history</HistoryName>
                    <Shown>23 shown, 5 <u>deleted</u></Shown>
                    <SizeRow>
                      <span>29.34 MB</span>
                      <Buttons><IconButton><Glyph name="checkSquare" size={15} /></IconButton></Buttons>
                    </SizeRow>
                    <ErrorMessage />
                    <ErrorMessage />
                  </HistoryInfo>
                  <Dataset $state="new" $height={113}>
                    <TitleBar>
                      <Glyph name="exclamation" size={16} />
                      <DatasetTitle>28: Sort on data 20</DatasetTitle>
                      <Actions off />
                    </TitleBar>
                    <Blurb $gap={8}>This is a new dataset and not all of its data are available yet</Blurb>
                    <Buttons><IconButton><Glyph name="info" /></IconButton></Buttons>
                  </Dataset>
                  <Dataset $state="ok" $height={155}>
                    <TitleBar><DatasetTitle>27: Sort on data 20</DatasetTitle><Actions /></TitleBar>
                    <Blurb $gap={2}>284 lines</Blurb>
                    <Meta>format: <b>tabular</b>, database: <b>hg38</b></Meta>
                    <Buttons>
                      <IconButton><Glyph name="floppy" /></IconButton>
                      <IconButton><Glyph name="info" /></IconButton>
                      <IconButton><Glyph name="refresh" /></IconButton>
                    </Buttons>
                    <Peek>
                      <PeekRow $head><span>1</span><span>2</span></PeekRow>
                      <PeekRow><span>15872</span><span>chr1</span></PeekRow>
                    </Peek>
                  </Dataset>
                  <Dataset $state="ok" $height={60}>
                    <TitleBar><DatasetTitle>26: Sort on data 20</DatasetTitle><Actions /></TitleBar>
                  </Dataset>
                </HistoryList>
                <Scrollbar><Arrow $up /><Thumb /><Arrow /></Scrollbar>
              </Scroller>
              <PanelFooter>
                <Grip />
                <Collapse $side="right"><Glyph name="chevronRight" size={15} /></Collapse>
              </PanelFooter>
            </Panel>
          </Workspace>
        </Browser>
      </Below>
    </Desktop>
  );
}
